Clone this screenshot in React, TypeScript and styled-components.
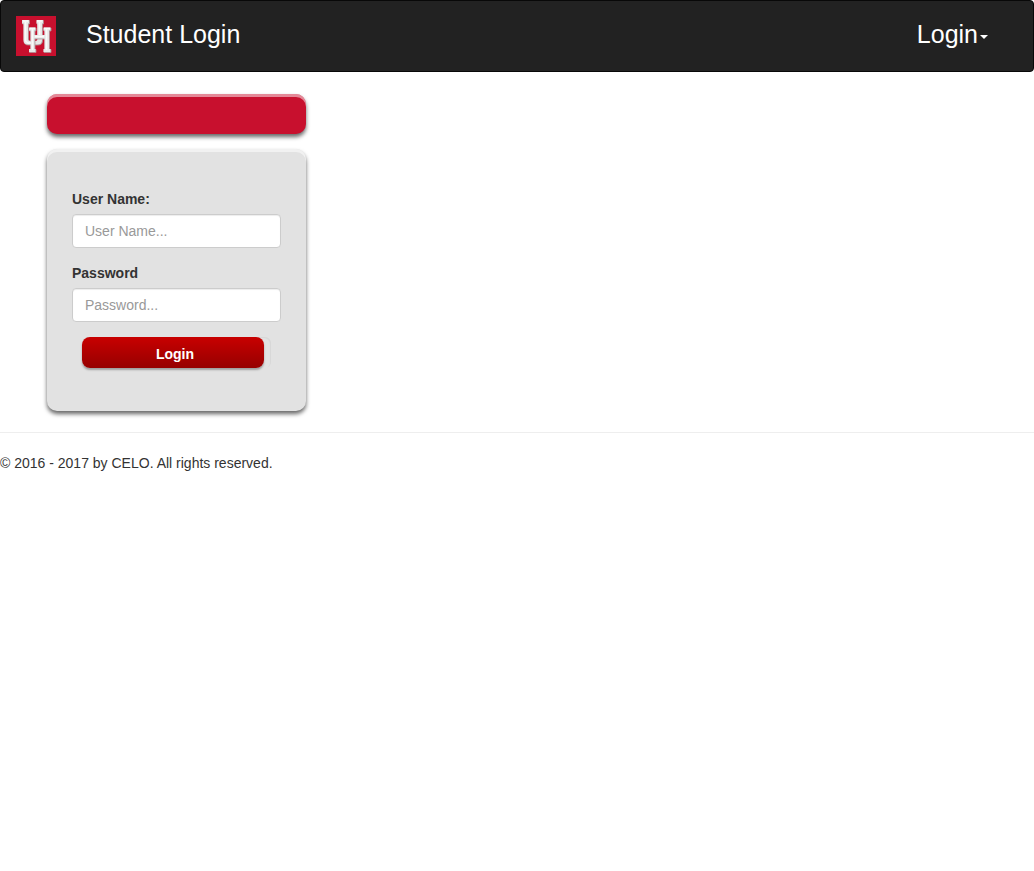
import React from 'react';
import styled, { createGlobalStyle } from 'styled-components';

const GlobalStyle = createGlobalStyle`
  *, *::before, *::after { box-sizing: border-box; }
  body {
    margin: 0;
    background: #fff;
    color: #333;
    font-family: "Liberation Sans", Arial, Helvetica, sans-serif;
    font-size: 14px;
    line-height: 20px;
  }
`;

const Navbar = styled.nav`
  display: flex;
  align-items: flex-start;
  min-height: 72px;
  padding: 15px 45px 15px 15px;
  background: #222;
  border: 1px solid #080808;
  border-radius: 4px;
`;

const Brand = styled.a`
  display: flex;
  height: 40px;
  margin-right: 30px;
`;

const NavLink = styled.a`
  color: #fff;
  font-size: 25px;
  line-height: 36px;
  text-decoration: none;
`;

const NavMenu = styled.button`
  display: flex;
  align-items: center;
  gap: 2px;
  margin-left: auto;
  padding: 0;
  border: 0;
  background: none;
  color: #fff;
  font: inherit;
  font-size: 25px;
  line-height: 36px;
`;

const Caret = styled.span`
  margin-top: 6px;
  border-top: 4px solid #fff;
  border-left: 4px solid transparent;
  border-right: 4px solid transparent;
`;

const Main = styled.main`
  display: flex;
  flex-direction: column;
  gap: 15px;
  width: 306px;
  max-width: 100%;
  padding: 22px 0 21px 47px;
`;

const Banner = styled.div`
  height: 40px;
  border-radius: 10px;
  background: #c8102e;
  box-shadow: inset 0 3px 0 rgba(255, 255, 255, 0.5), 0 3px 4px rgba(0, 0, 0, 0.6);
`;

const LoginForm = styled.form`
  padding: 40px 25px 43px;
  border-radius: 10px;
  background: #e2e2e2;
  box-shadow: inset 0 3px 0 rgba(255, 255, 255, 0.5), 0 3px 4px rgba(0, 0, 0, 0.6);
`;

const Field = styled.div`
  display: flex;
  flex-direction: column;
  gap: 5px;
  margin-bottom: 15px;
`;

const Label = styled.label`
  font-weight: bold;
`;

const Input = styled.input`
  width: 100%;
  height: 34px;
  padding: 6px 12px;
  border: 1px solid #ccc;
  border-radius: 4px;
  background: #fff;
  box-shadow: inset 0 1px 1px rgba(0, 0, 0, 0.075);
  color: #555;
  font: inherit;
  &::placeholder { color: #999; opacity: 1; }
`;

const ButtonFrame = styled.div`
  margin: 0 10px;
  padding-right: 7px;
  border-radius: 6px;
  box-shadow: inset -1px 1px 1px rgba(0, 0, 0, 0.05);
`;

const SubmitButton = styled.button`
  display: block;
  width: 100%;
  height: 31px;
  padding: 3px 0 0 4px;
  border: 0;
  border-radius: 8px;
  background: linear-gradient(#c80000, #960000);
  box-shadow: 0 2px 2px rgba(0, 0, 0, 0.3);
  color: #fff;
  font: inherit;
  font-weight: bold;
`;

const Footer = styled.footer`
  padding-top: 20px;
  border-top: 1px solid #eee;
`;

const Copyright = styled.p`
  margin: 0;
`;

const U_SHAPE =
  'M6 4H13V7.5H12V23Q12 25 14 25H19.5Q21.5 25 21.5 23V7.5H20.5V4H27V7.5H26V24Q26 28.5 21.5 28.5H12Q7.5 28.5 7.5 24V7.5H6Z';
const H_SHAPE =
  'M13 11.5H19.5V14.5H18.5V19H28.5V14.5H27.5V11.5H34.5V14.5H33V33H34.5V36H27.5V33H28.5V22.5H18.5V33H19.5V36H13V33H14.5V14.5H13Z';

function Logo() {
  return (
    <svg width="40" height="40" viewBox="0 0 40 40" aria-hidden="true">
      <rect width="40" height="40" fill="#c8102e" />
      <path d={U_SHAPE} transform="translate(.5 .5)" fill="#999" stroke="#b9959b" strokeWidth=".8" />
      <path d={U_SHAPE} fill="#e8e8e8" />
      <path d={H_SHAPE} transform="translate(.5 .5)" fill="#999" stroke="#b9959b" strokeWidth=".8" />
      <path d={H_SHAPE} fill="#e8e8e8" />
      <path d="M21.5 7.5H26V19H21.5Z" fill="#e8e8e8" />
      <path
        d="M7 5H12M21 5H26M14 12.5H19M28 12.5H34M9.5 6V25L12 27H15M23.5 6V19M16.5 13V34M30.5 13V34M19 20.5H28"
        fill="none"
        stroke="#fafafa"
        strokeWidth="1.5"
      />
    </svg>
  );
}

export default function App() {
  return (
    <>
      <GlobalStyle />
      <Navbar>
        <Brand href="#" aria-label="Home"><Logo /></Brand>
        <NavLink href="#">Student Login</NavLink>
        <NavMenu type="button" aria-haspopup="menu">
          Login<Caret />
        </NavMenu>
      </Navbar>
      <Main>
        <Banner />
        <LoginForm onSubmit={(event) => event.preventDefault()}>
          <Field>
            <Label htmlFor="username">User Name:</Label>
            <Input id="username" type="text" placeholder="User Name..." />
          </Field>
          <Field>
            <Label htmlFor="password">Password</Label>
            <Input id="password" type="password" placeholder="Password..." />
          </Field>
          <ButtonFrame>
            <SubmitButton type="submit">Login</SubmitButton>
          </ButtonFrame>
        </LoginForm>
      </Main>
      <Footer>
        <Copyright>© 2016 - 2017 by CELO. All rights reserved.</Copyright>
      </Footer>
    </>
  );
}
